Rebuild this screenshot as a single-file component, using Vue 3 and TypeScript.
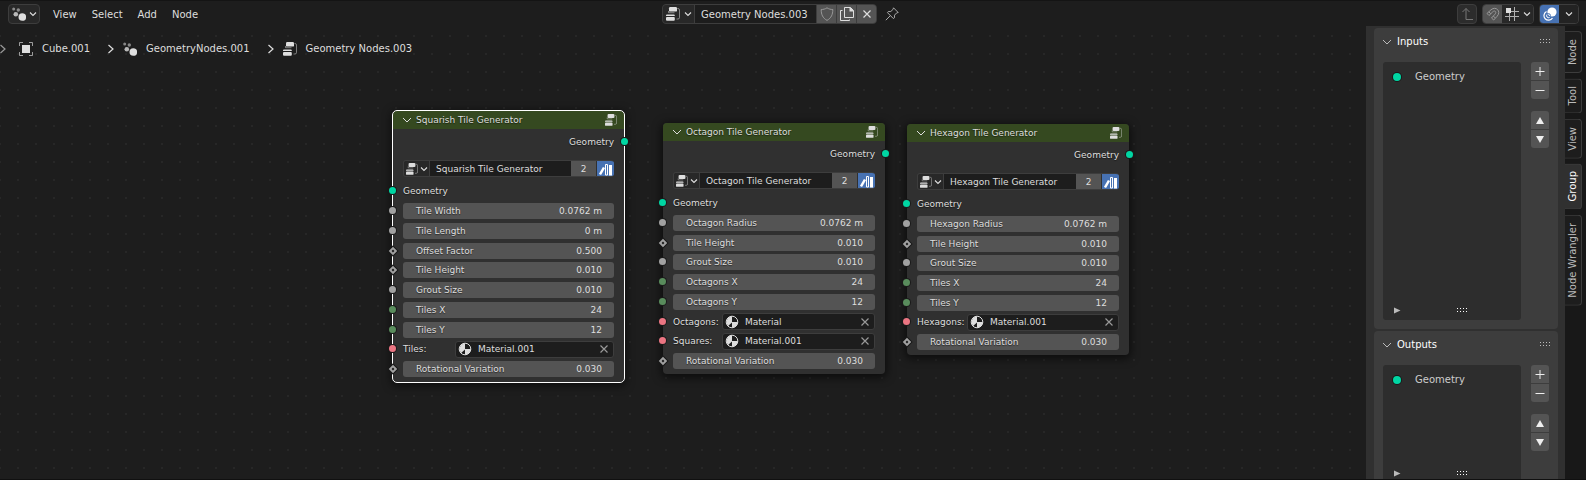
<script setup lang="ts">
import { ref } from 'vue'

type SocketKind = 'geometry' | 'float' | 'field' | 'int' | 'material'

interface NodeRow {
  label: string
  value: string
  socket: SocketKind
}

interface TileNode {
  id: string
  title: string
  x: number
  y: number
  width: number
  height: number
  selected: boolean
  users: number
  materialWidth: number
  rows: NodeRow[]
}

const nodes = ref<TileNode[]>([
  {
    id: 'squarish',
    title: 'Squarish Tile Generator',
    x: 393,
    y: 85,
    width: 231,
    height: 271,
    selected: true,
    users: 2,
    materialWidth: 159,
    rows: [
      { label: 'Tile Width', value: '0.0762 m', socket: 'float' },
      { label: 'Tile Length', value: '0 m', socket: 'float' },
      { label: 'Offset Factor', value: '0.500', socket: 'field' },
      { label: 'Tile Height', value: '0.010', socket: 'field' },
      { label: 'Grout Size', value: '0.010', socket: 'float' },
      { label: 'Tiles X', value: '24', socket: 'int' },
      { label: 'Tiles Y', value: '12', socket: 'int' },
      { label: 'Tiles:', value: 'Material.001', socket: 'material' },
      { label: 'Rotational Variation', value: '0.030', socket: 'field' },
    ],
  },
  {
    id: 'octagon',
    title: 'Octagon Tile Generator',
    x: 663,
    y: 97,
    width: 222,
    height: 251,
    selected: false,
    users: 2,
    materialWidth: 153,
    rows: [
      { label: 'Octagon Radius', value: '0.0762 m', socket: 'float' },
      { label: 'Tile Height', value: '0.010', socket: 'field' },
      { label: 'Grout Size', value: '0.010', socket: 'float' },
      { label: 'Octagons X', value: '24', socket: 'int' },
      { label: 'Octagons Y', value: '12', socket: 'int' },
      { label: 'Octagons:', value: 'Material', socket: 'material' },
      { label: 'Squares:', value: 'Material.001', socket: 'material' },
      { label: 'Rotational Variation', value: '0.030', socket: 'field' },
    ],
  },
  {
    id: 'hexagon',
    title: 'Hexagon Tile Generator',
    x: 907,
    y: 98,
    width: 222,
    height: 231,
    selected: false,
    users: 2,
    materialWidth: 152,
    rows: [
      { label: 'Hexagon Radius', value: '0.0762 m', socket: 'float' },
      { label: 'Tile Height', value: '0.010', socket: 'field' },
      { label: 'Grout Size', value: '0.010', socket: 'float' },
      { label: 'Tiles X', value: '24', socket: 'int' },
      { label: 'Tiles Y', value: '12', socket: 'int' },
      { label: 'Hexagons:', value: 'Material.001', socket: 'material' },
      { label: 'Rotational Variation', value: '0.030', socket: 'field' },
    ],
  },
])

const menus = ['View', 'Select', 'Add', 'Node']
const tabs = ['Node', 'Tool', 'View', 'Group', 'Node Wrangler']
const activeTab = ref('Group')
const treeName = ref('Geometry Nodes.003')
const panels = [
  { id: 'inputs', title: 'Inputs', item: 'Geometry' },
  { id: 'outputs', title: 'Outputs', item: 'Geometry' },
]

function frame(n: TileNode) {
  return { left: `${n.x}px`, top: `${n.y}px`, width: `${n.width}px`, height: `${n.height}px` }
}
</script>

<template>
  <div class="editor">
    <svg class="defs" aria-hidden="true">
      <symbol id="i-tree" viewBox="0 0 14 14">
        <rect x="3" y="0" width="8" height="4.600" rx="1.200" fill="currentColor" />
        <path d="M2.500 4v1.700h6M11.500 1.500h.5a1.500 1.500 0 0 1 1.500 1.500v7.500a1.500 1.500 0 0 1-1.500 1.500h-1.500" fill="none" stroke="currentColor" opacity=".5" />
        <path d="M0 9V8.500a1 1 0 0 1 1-1h6.800a1 1 0 0 1 1 1V9z" fill="currentColor" />
        <rect x="0" y="10" width="8.800" height="3.800" rx="1" fill="currentColor" />
      </symbol>
      <symbol id="i-geo" viewBox="0 0 14 14">
        <circle cx="1.700" cy="2" r="1.500" fill="currentColor" opacity=".55" />
        <circle cx="6.300" cy="3" r="1.700" fill="currentColor" opacity=".55" />
        <circle cx="3.800" cy="7.300" r="2.300" fill="currentColor" opacity=".8" />
        <circle cx="10.300" cy="10" r="3.800" fill="currentColor" />
      </symbol>
      <symbol id="i-down" viewBox="0 0 8 8">
        <path d="M1 2.500l3 3 3-3" fill="none" stroke="currentColor" stroke-width="1.100" />
      </symbol>
      <symbol id="i-fold" viewBox="0 0 10 10">
        <path d="M1 3l4 4 4-4" fill="none" stroke="currentColor" />
      </symbol>
      <symbol id="i-x" viewBox="0 0 10 10">
        <path d="M1.500 1.500l7 7M8.500 1.500l-7 7" fill="none" stroke="currentColor" stroke-width="1.200" />
      </symbol>
      <symbol id="i-cube" viewBox="0 0 14 14">
        <rect x="3" y="3" width="8" height="8" fill="currentColor" />
        <path d="M.5 4V.5H4M10 .5h3.500V4M13.500 10v3.500H10M4 13.500H.5V10" fill="none" stroke="currentColor" opacity=".65" />
      </symbol>
      <symbol id="i-next" viewBox="0 0 8 10">
        <path d="M1.500 1l4.500 4-4.500 4" fill="none" stroke="currentColor" stroke-width="1.200" />
      </symbol>
      <symbol id="i-material" viewBox="0 0 14 14">
        <circle cx="7" cy="7" r="5.800" fill="none" stroke="currentColor" />
        <path d="M7 1.200V7h5.800A5.800 5.800 0 0 1 7 12.800V7H1.800A5.500 5.500 0 0 1 7 1.200z" fill="currentColor" />
        <path d="M1.500 7a5.500 5.500 0 0 0 1.600 4L7 7.500V7z" fill="currentColor" />
      </symbol>
      <symbol id="i-asset" viewBox="0 0 14 14">
        <path d="M1 12.500L5 5.500" stroke="currentColor" stroke-width="2.500" />
        <path d="M6.500 13V2.500h2V13z" fill="none" stroke="currentColor" />
        <rect x="10" y="3" width="3" height="10.500" fill="currentColor" />
      </symbol>
    </svg>

    <header class="bar">
      <div class="bar-left">
        <button class="box type" aria-label="Editor type">
          <svg class="ic"><use href="#i-geo" /></svg><svg class="ic-s"><use href="#i-down" /></svg>
        </button>
        <nav class="menus">
          <button v-for="m in menus" :key="m">{{ m }}</button>
        </nav>
      </div>

      <div class="bar-mid">
        <div class="box id-block">
          <button class="pick" aria-label="Browse node tree">
            <svg class="ic"><use href="#i-tree" /></svg><svg class="ic-s"><use href="#i-down" /></svg>
          </button>
          <input v-model="treeName" aria-label="Node tree name" />
          <button class="sq" aria-label="Fake user">
            <svg class="ic dim" viewBox="0 0 14 14"><path d="M7 .8c1.800 1.300 3.800 1.700 5.800 1.700 0 5-1.500 8.500-5.800 10.900C2.700 11 1.200 7.500 1.200 2.500 3.200 2.500 5.200 2.100 7 .8z" fill="none" stroke="currentColor" /></svg>
          </button>
          <button class="sq" aria-label="Duplicate">
            <svg class="ic" viewBox="0 0 14 14"><path d="M4.500.5h6l3 3v7h-9zM2.500 3.500h-2v10h9v-1" fill="none" stroke="currentColor" /><path d="M9.500.5h1l3 3v1h-4z" fill="currentColor" /></svg>
          </button>
          <button class="sq" aria-label="Unlink"><svg class="ic-m"><use href="#i-x" /></svg></button>
        </div>
        <button class="pin" aria-label="Pin">
          <svg class="ic" viewBox="0 0 14 14"><path d="M8.500.8l4.700 4.700-1.500.4-2.200 2.300v2.500l-1.200.8-5.800-5.800.8-1.200h2.500l2.300-2.200zM5.300 8.700L.8 13.200" fill="none" stroke="currentColor" /></svg>
        </button>
      </div>

      <div class="bar-right">
        <button class="box sq faint" aria-label="Parent tree">
          <svg class="ic" viewBox="0 0 14 14"><path d="M2.500 5L6 1.500 9.500 5M6 1.500v11h7" fill="none" stroke="currentColor" /></svg>
        </button>
        <div class="box group">
          <button class="sq snap" aria-label="Snap">
            <svg class="ic" viewBox="0 0 14 14"><path d="M1 6.500L5 2.800C10-1.500 15.500 4.500 11.200 9.200L7.700 13 5.500 11 9 7.200C11 5 8.800 2.800 6.800 4.800L3 8.500zM2.800 4.800l2 2M7.300 9l2 2" fill="none" stroke="currentColor" /></svg>
          </button>
          <button class="pick" aria-label="Snap to">
            <svg class="ic" viewBox="0 0 14 14"><path d="M4.500 6v8M9.500 0v14M6 4.500h8M0 9.500h14" stroke="currentColor" opacity=".75" /><rect x="1" y="1" width="5" height="5" fill="currentColor" /></svg><svg class="ic-s"><use href="#i-down" /></svg>
          </button>
        </div>
        <div class="box group">
          <button class="sq blue" aria-label="Overlays">
            <svg class="ic" viewBox="0 0 14 14"><circle cx="9" cy="5" r="4.600" fill="currentColor" /><path d="M3.500 4.500a4.600 4.600 0 1 0 6 6.500" fill="none" stroke="currentColor" stroke-width="1.200" /><circle cx="5.500" cy="8.500" r="1.900" fill="none" stroke="#4772b3" /><path d="M4 7.500a2 2 0 0 0 2.500 3" fill="none" stroke="currentColor" /></svg>
          </button>
          <button class="more" aria-label="Overlay options"><svg class="ic-s"><use href="#i-down" /></svg></button>
        </div>
      </div>
    </header>

    <div class="body">
      <main class="canvas">
        <nav class="crumbs" aria-label="Tree path">
          <svg class="sep"><use href="#i-next" /></svg>
          <span class="crumb"><svg class="ic"><use href="#i-cube" /></svg>Cube.001</span>
          <svg class="sep"><use href="#i-next" /></svg>
          <span class="crumb"><svg class="ic"><use href="#i-geo" /></svg>GeometryNodes.001</span>
          <svg class="sep"><use href="#i-next" /></svg>
          <span class="crumb"><svg class="ic"><use href="#i-tree" /></svg>Geometry Nodes.003</span>
        </nav>

        <section v-for="n in nodes" :key="n.id" class="node" :class="{ selected: n.selected }" :style="frame(n)">
          <h2 class="node-head">
            <svg class="ic-m"><use href="#i-fold" /></svg>
            <span>{{ n.title }}</span>
            <svg class="ic-n"><use href="#i-tree" /></svg>
          </h2>
          <div class="line out">Geometry<i class="socket geometry"></i></div>
          <div class="id-row">
            <button class="pick" aria-label="Browse group">
              <svg class="ic-n"><use href="#i-tree" /></svg><svg class="ic-s"><use href="#i-down" /></svg>
            </button>
            <input v-model="n.title" aria-label="Group name" />
            <button class="users">{{ n.users }}</button>
            <button class="asset" aria-label="Asset"><svg class="ic"><use href="#i-asset" /></svg></button>
          </div>
          <div class="line in"><i class="socket geometry"></i>Geometry</div>
          <div class="rows">
            <div v-for="r in n.rows" :key="r.label" class="row">
              <i class="socket" :class="r.socket"></i>
              <template v-if="r.socket === 'material'">
                <label :for="n.id + r.label">{{ r.label }}</label>
                <div class="material" :style="{ width: n.materialWidth + 'px' }">
                  <svg class="ic"><use href="#i-material" /></svg>
                  <input :id="n.id + r.label" v-model="r.value" />
                  <button aria-label="Clear material"><svg class="ic-m"><use href="#i-x" /></svg></button>
                </div>
              </template>
              <label v-else class="field">
                <span>{{ r.label }}</span>
                <input v-model="r.value" />
              </label>
            </div>
          </div>
        </section>
      </main>

      <aside class="side">
        <section v-for="p in panels" :key="p.id" class="panel" :class="p.id">
          <h3>
            <svg class="ic-m fold"><use href="#i-fold" /></svg>{{ p.title }}
            <svg class="grip" viewBox="0 0 11 5"><path d="M0 .5h1m2 0h1m2 0h1m2 0h1M0 3.500h1m2 0h1m2 0h1m2 0h1" stroke="currentColor" /></svg>
          </h3>
          <div class="panel-body">
            <div class="list">
              <div class="item"><i class="dot"></i>{{ p.item }}</div>
              <div class="list-foot">
                <svg class="play" viewBox="0 0 7 7"><path d="M0 .5l6.500 3-6.500 3z" fill="currentColor" /></svg>
                <svg class="grip" viewBox="0 0 11 5"><path d="M0 .5h1m2 0h1m2 0h1m2 0h1M0 3.500h1m2 0h1m2 0h1m2 0h1" stroke="currentColor" /></svg>
              </div>
            </div>
            <div class="tools">
              <div class="pair">
                <button aria-label="Add"><svg viewBox="0 0 10 10"><path d="M5 1v9M.5 5.500h9" stroke="currentColor" /></svg></button>
                <button aria-label="Remove"><svg viewBox="0 0 10 10"><path d="M.5 5.500h9" stroke="currentColor" /></svg></button>
              </div>
              <div class="pair">
                <button aria-label="Move up"><svg viewBox="0 0 10 10"><path d="M5 2l4 7H1z" fill="currentColor" /></svg></button>
                <button aria-label="Move down"><svg viewBox="0 0 10 10"><path d="M5 9l4-7H1z" fill="currentColor" /></svg></button>
              </div>
            </div>
          </div>
        </section>
      </aside>
      <nav class="tabs">
        <button v-for="t in tabs" :key="t" :class="{ active: t === activeTab }" @click="activeTab = t">{{ t }}</button>
      </nav>
    </div>
  </div>
</template>

<style>
body {
  margin: 0;
  background: #1d1d1d;
}
</style>

<style scoped>
.editor {
  display: flex;
  flex-direction: column;
  height: 100vh;
  box-sizing: border-box;
  overflow: hidden;
  background: #1d1d1d;
  border-top: 1px solid #141414;
  border-bottom: 1px solid #101010;
  color: #dedede;
  font-family: "DejaVu Sans", sans-serif;
  font-size: 10px;
  line-height: 16px;
}
.editor * {
  box-sizing: border-box;
}
.defs {
  position: absolute;
  width: 0;
  height: 0;
}
button,
input {
  margin: 0;
  padding: 0;
  border: 0;
  background: none;
  color: inherit;
  font: inherit;
  min-width: 0;
}
button {
  display: flex;
  align-items: center;
  justify-content: center;
}
svg {
  display: block;
  flex: none;
}
.ic {
  width: 14px;
  height: 14px;
}
.ic-n {
  width: 12px;
  height: 12px;
}
.ic-m {
  width: 10px;
  height: 10px;
}
.ic-s {
  width: 8px;
  height: 8px;
}
.dim {
  color: #999;
}

.bar {
  display: grid;
  grid-template-columns: 1fr auto 1fr;
  align-items: center;
  flex: none;
  height: 25px;
  padding: 1px 7px 0 8px;
}
.bar-left,
.bar-mid,
.bar-right {
  display: flex;
  align-items: center;
}
.bar-right {
  justify-content: flex-end;
  gap: 5px;
}
.bar-mid {
  gap: 8px;
  padding-right: 26px;
}
.box {
  display: flex;
  height: 20px;
  border: 1px solid #3d3d3d;
  border-radius: 4px;
  overflow: hidden;
}
.type {
  gap: 3px;
  width: 32px;
  background: #282828;
}
.menus {
  display: flex;
  gap: 15px;
  margin-left: 13px;
}
.menus button {
  padding-top: 2px;
}
.id-block {
  width: 215px;
  background: #3d3d3d;
}
.pick {
  gap: 4px;
  width: 31px;
  background: #282828;
}
.id-block input {
  flex: 1;
  padding: 2px 6px 0;
  margin-left: 1px;
  background: #1d1d1d;
}
.sq {
  width: 20px;
}
.group .sq {
  width: 19px;
}
.id-block .sq {
  width: 19px;
  margin-left: 1px;
  background: #545454;
}
.pin {
  color: #aaa;
}
.faint {
  background: #2c2c2c;
  color: #777;
}
.snap {
  background: #545454;
  color: #999;
}
.blue {
  background: #4772b3;
  color: #fff;
}
.more {
  width: 19px;
  background: #232323;
}

.body {
  display: flex;
  flex: 1;
  min-height: 0;
}
.canvas {
  position: relative;
  flex: 1;
  overflow: hidden;
  background-image: radial-gradient(circle at 9px 9px, #272727 1px, transparent 1px);
  background-size: 18px 18px;
  background-position: 9px 1px;
}
.crumbs {
  display: flex;
  align-items: center;
  height: 20px;
  margin-top: 13px;
}
.crumb {
  display: flex;
  align-items: center;
  gap: 9px;
  margin: 0 17px 0 8px;
}
.crumbs .sep:first-child {
  margin-left: -1px;
  margin-right: 4px;
  color: #999;
}
.sep {
  width: 8px;
  height: 10px;
}

.node {
  position: absolute;
  display: flex;
  flex-direction: column;
  padding-bottom: 5px;
  border-radius: 4px;
  background: #303030;
  box-shadow: 0 2px 8px 2px rgba(0, 0, 0, 0.55);
  font-size: 9px;
  text-shadow: 0 1px 1px rgba(0, 0, 0, 0.5);
}
.node.selected {
  outline: 1px solid #fff;
}
.node-head {
  display: flex;
  align-items: center;
  gap: 4px;
  flex: none;
  height: 18px;
  margin: 0;
  padding: 0 7px 0 9px;
  border-radius: 4px 4px 0 0;
  background: #354920;
  font-size: 9px;
  font-weight: 400;
}
.node-head span {
  flex: 1;
}
.line {
  position: relative;
  flex: none;
  height: 20px;
  padding: 0 10px;
  line-height: 20px;
}
.out {
  margin-top: 3px;
  text-align: right;
}
.id-row {
  display: flex;
  flex: none;
  height: 17px;
  margin: 8px 10px 0;
  border: 1px solid #3d3d3d;
  border-right: 0;
  border-radius: 3px;
  overflow: hidden;
}
.id-row .pick {
  gap: 2px;
  width: 26px;
  border-right: 1px solid #3d3d3d;
}
.id-row input {
  flex: 1;
  padding: 0 6px;
  background: #1d1d1d;
}
.users {
  width: 25px;
  background: #545454;
}
.asset {
  width: 17px;
  margin-left: 1px;
  background: #4772b3;
  color: #fff;
}
.in {
  margin-top: 4px;
}
.rows {
  display: flex;
  flex: 1;
  flex-direction: column;
  justify-content: space-between;
  padding: 2px 10px 0;
}
.row {
  position: relative;
  display: flex;
  align-items: center;
  justify-content: space-between;
  height: 16px;
}
.field {
  display: flex;
  align-items: center;
  width: 100%;
  height: 16px;
  padding: 0 12px 0 13px;
  border-radius: 3px;
  background: #545454;
}
.field span {
  flex: none;
}
.field input {
  flex: 1;
  text-align: right;
}
.material {
  display: flex;
  align-items: center;
  gap: 6px;
  height: 17px;
  padding: 0 4px 0 2px;
  border: 1px solid #3d3d3d;
  border-radius: 3px;
  background: #1d1d1d;
}
.material input {
  flex: 1;
}
.material button {
  color: #999;
}
.socket {
  position: absolute;
  top: 50%;
  left: -4px;
  width: 7px;
  height: 7px;
  margin-top: -4px;
  border-radius: 50%;
  box-shadow: 0 0 0 1px #1a1a1a;
}
.row .socket {
  left: -14px;
}
.out .socket {
  left: auto;
  right: -4px;
}
.geometry {
  background: #00d6a3;
}
.float {
  background: #a1a1a1;
}
.int {
  background: #598c5c;
}
.material.socket {
  padding: 0;
  border: 0;
  border-radius: 50%;
  background: #eb7582;
}
.field.socket {
  width: 6px;
  height: 6px;
  margin: -3px 0 0 1px;
  padding: 0;
  border: 2px solid #a1a1a1;
  border-radius: 0;
  background: #1a1a1a;
  transform: rotate(45deg);
}

.side {
  display: flex;
  flex-direction: column;
  gap: 2px;
  width: 199px;
  flex: none;
  padding: 2px 7px 0 8px;
  overflow: hidden;
  background: #303030;
}
.panel {
  flex: none;
  border-radius: 4px;
  background: #3d3d3d;
  padding: 0 9px 9px;
}
.panel h3 {
  display: flex;
  align-items: center;
  gap: 5px;
  height: 27px;
  margin: 0 -2px 7px -1px;
  color: #fff;
  font-size: 10px;
  font-weight: 400;
}
.fold {
  color: #bbb;
}
.grip {
  width: 11px;
  height: 5px;
  color: #bbb;
}
h3 .grip {
  margin-left: auto;
}
.panel-body {
  display: flex;
  gap: 10px;
}
.list {
  display: flex;
  flex: 1;
  flex-direction: column;
  justify-content: space-between;
  height: 258px;
  border-radius: 3px;
  background: #2d2d2d;
}
.outputs .list {
  height: 118px;
}
.item {
  display: flex;
  align-items: center;
  gap: 14px;
  height: 20px;
  margin-top: 5px;
  padding-left: 10px;
  color: #ccc;
}
.dot {
  width: 8px;
  height: 8px;
  border-radius: 50%;
  background: #00d6a3;
  box-shadow: 0 0 0 1px #1a1a1a;
}
.list-foot {
  display: flex;
  align-items: center;
  gap: 56px;
  height: 20px;
  padding-left: 11px;
}
.play {
  width: 7px;
  height: 7px;
  color: #bbb;
}
.list-foot .grip {
  color: #fff;
}
.tools {
  display: flex;
  flex-direction: column;
  gap: 12px;
  width: 18px;
}
.pair {
  display: flex;
  flex-direction: column;
  gap: 1px;
  border-radius: 3px;
  overflow: hidden;
}
.pair button {
  height: 18px;
  background: #545454;
  color: #eee;
}
.pair svg {
  width: 10px;
  height: 10px;
}

.tabs {
  display: flex;
  flex: none;
  flex-direction: column;
  align-items: flex-start;
  gap: 5px;
  width: 21px;
  padding-top: 5px;
  background: #181818;
}
.tabs button {
  width: 17px;
  padding: 7px 0;
  border: 1px solid #3d3d3d;
  border-right: 0;
  border-radius: 4px 0 0 4px;
  background: #1d1d1d;
  color: #bbb;
  writing-mode: vertical-rl;
  transform: rotate(180deg);
}
.tabs .active {
  background: #303030;
  color: #fff;
}
</style>
